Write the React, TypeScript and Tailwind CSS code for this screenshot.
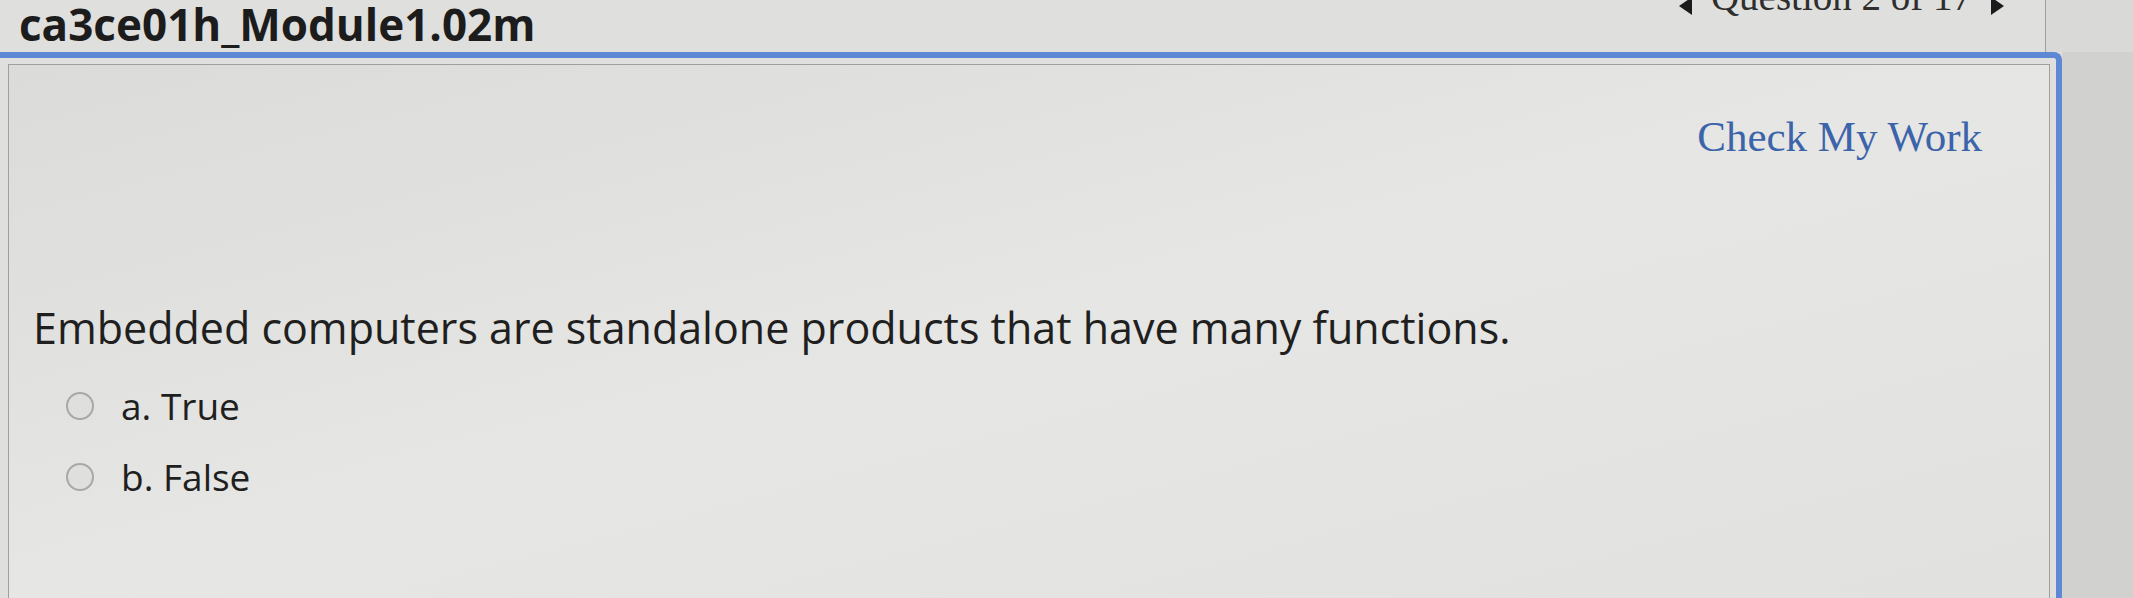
import React from 'react';

type Choice = { key: string; label: string };

const choices: Choice[] = [
  { key: 'a', label: 'True' },
  { key: 'b', label: 'False' },
];

const Arrow: React.FC<{ dir: 'left' | 'right' }> = ({ dir }) => (
  <svg width="15" height="20" viewBox="0 0 15 20" className="mt-[19px] shrink-0">
    {dir === 'left' ? (
      <path d="M14 1 L1 10 L14 19 Z" fill="#1b1b1b" />
    ) : (
      <path d="M1 1 L14 10 L1 19 Z" fill="#1b1b1b" />
    )}
  </svg>
);

const ChoiceRow: React.FC<{ choice: Choice }> = ({ choice }) => (
  <label className="flex items-center gap-[27px] h-[37px] cursor-pointer">
    <span className="ml-[57px] w-[28px] h-[28px] rounded-full border-2 border-[#a8a8a7] bg-[#dfdfde] shrink-0" />
    <span className="text-[37px] leading-none text-[#1f1f1f]">
      {choice.key}. {choice.label}
    </span>
  </label>
);

export default function App() {
  return (
    <div className="w-[2133px] h-[598px] overflow-hidden flex flex-col bg-[#dfdfdd] font-['Open_Sans','Liberation_Sans',sans-serif]">
      <header className="h-[52px] shrink-0 flex items-start">
        <h1 className="ml-[19px] mt-[2px] text-[44px] leading-none font-bold text-[#1c1c1c]">
          ca3ce01h_Module1.02m
        </h1>
        <nav className="ml-auto mr-[40px] -mt-[23px] flex items-start gap-[18px] font-['Liberation_Serif',serif] text-[39px] leading-none text-[#2e2e2e]">
          <Arrow dir="left" />
          <span>Question 2 of 17</span>
          <Arrow dir="right" />
        </nav>
        <div className="w-[88px] h-full shrink-0 border-l border-[#a09f9c] bg-[#d9d9d8]" />
      </header>

      <div className="flex flex-1 min-h-0">
        <section className="flex-1 flex flex-col border-t-[6px] border-r-[6px] border-[#5f88d4] rounded-tr-[8px]">
          <div className="flex-1 mt-[6px] mr-[6px] ml-[8px] border-t border-r border-l border-[#a09f9c] bg-linear-to-br from-[#dbdbd9] via-[#e6e6e4] to-[#e1e1df] flex flex-col">
            <div className="flex justify-end pr-[67px] mt-[50px]">
              <button className="font-['Liberation_Serif',serif] text-[43px] leading-none text-[#3b64aa]">
                Check My Work
              </button>
            </div>

            <p className="mt-[148px] pl-[24px] text-[43px] leading-none text-[#1f1f1f]">
              Embedded computers are standalone products that have many functions.
            </p>

            <div className="mt-[38px] flex flex-col gap-[34px]">
              {choices.map(c => (
                <ChoiceRow key={c.key} choice={c} />
              ))}
            </div>
          </div>
        </section>
        <div className="w-[71px] shrink-0 bg-[#d1d1d0]" />
      </div>
    </div>
  );
}
